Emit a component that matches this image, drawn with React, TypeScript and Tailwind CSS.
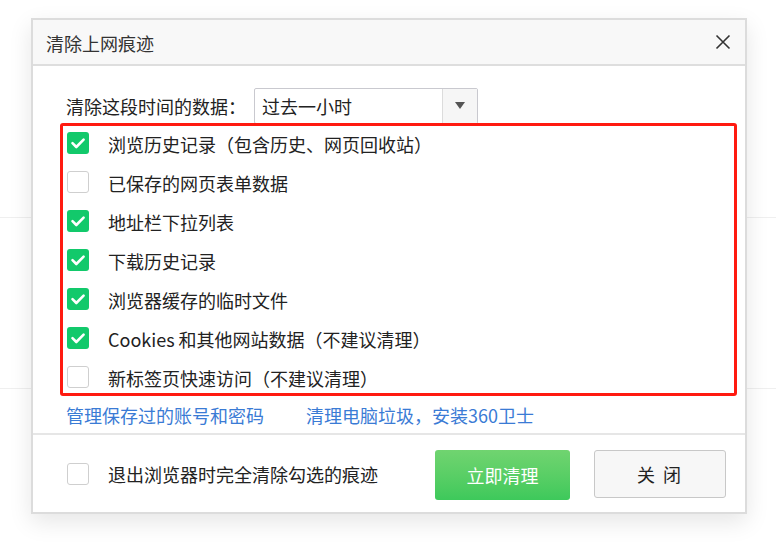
import React, { useState } from 'react';

type Item = { label: string; checked: boolean };

const initialItems: Item[] = [
  { label: '浏览历史记录（包含历史、网页回收站）', checked: true },
  { label: '已保存的网页表单数据', checked: false },
  { label: '地址栏下拉列表', checked: true },
  { label: '下载历史记录', checked: true },
  { label: '浏览器缓存的临时文件', checked: true },
  { label: 'Cookies 和其他网站数据（不建议清理）', checked: true },
  { label: '新标签页快速访问（不建议清理）', checked: false },
];

function Checkbox({ checked, onChange }: { checked: boolean; onChange: () => void }) {
  return (
    <button
      type="button"
      onClick={onChange}
      className={[
        'w-[22px] h-[22px] rounded-[3px] flex items-center justify-center shrink-0',
        checked ? 'bg-[#12c96b]' : 'bg-white border-[1.5px] border-[#cfcfcf]',
      ].join(' ')}
    >
      {checked && (
        <svg width="22" height="22" viewBox="0 0 22 22" fill="none">
          <path d="M5.5 11.2 L9.3 15 L16.6 7.6" stroke="#fff" strokeWidth="2.6" strokeLinecap="round" strokeLinejoin="round" />
        </svg>
      )}
    </button>
  );
}

export default function App() {
  const [items, setItems] = useState(initialItems);
  const [clearOnExit, setClearOnExit] = useState(false);

  const toggle = (index: number) => {
    setItems((prev) => prev.map((item, i) => (i === index ? { ...item, checked: !item.checked } : item)));
  };

  return (
    <div
      className="relative w-[776px] h-[555px] bg-white overflow-hidden text-[#222]"
      style={{ fontFamily: '"Noto Sans CJK SC", "Noto Sans", sans-serif' }}
    >
      {/* page behind the dialog */}
      <div className="pt-[217px]">
        <div className="border-t border-[#efefef] h-[171px]" />
        <div className="border-t border-[#efefef]" />
      </div>

      <div className="absolute left-[31px] top-[18px] w-[716px] h-[496px] bg-white border-2 border-[#dcdcdc] shadow-[0_8px_22px_rgba(0,0,0,0.10)] flex flex-col">
        <div className="h-[46px] bg-[#f8f8f8] border-b-2 border-[#dedede] flex items-center justify-between pl-[13px] pr-[14px] shrink-0">
          <span className="text-[18px] leading-none text-[#333] mt-[1px]">清除上网痕迹</span>
          <svg width="16" height="16" viewBox="0 0 16 16" fill="none">
            <path d="M1.5 1.5 L14.5 14.5 M14.5 1.5 L1.5 14.5" stroke="#333" strokeWidth="1.6" />
          </svg>
        </div>

        <div className="flex items-center pl-[33px] pt-[22px] h-[58px] shrink-0">
          <span className="text-[18px] leading-none w-[188px]">清除这段时间的数据：</span>
          <div className="flex h-[36px] w-[224px] border border-[#c9c9cf] rounded-[2px] bg-white">
            <div className="flex-1 flex items-center pl-[7px] text-[18px] leading-none">过去一小时</div>
            <div className="w-[35px] border-l border-[#dcdcdc] bg-[#f6f6f6] flex items-center justify-center">
              <svg width="10" height="8" viewBox="0 0 10 8">
                <path d="M0 0 H10 L5 7 Z" fill="#555" />
              </svg>
            </div>
          </div>
        </div>

        <div className="relative ml-[27px] w-[677px] -mt-[1px]">
          {items.map((item, index) => (
            <div key={index} className="h-[39px] flex items-center pl-[7px]">
              <Checkbox checked={item.checked} onChange={() => toggle(index)} />
              <span className="ml-[19px] mt-[3px] text-[18px] leading-none text-[#222]">{item.label}</span>
            </div>
          ))}
          <div className="absolute inset-0 border-[3px] border-[#ff1a10] rounded-[3px] pointer-events-none" />
        </div>

        <div className="flex items-center h-[37px] pl-[33px] text-[18px] leading-none text-[#3a7bd5] shrink-0">
          <a className="w-[240px]">管理保存过的账号和密码</a>
          <a>清理电脑垃圾，安装360卫士</a>
        </div>

        <div className="flex-1 border-t-2 border-[#e6e6e6] flex items-center pl-[34px] pr-[19px]">
          <Checkbox checked={clearOnExit} onChange={() => setClearOnExit((v) => !v)} />
          <span className="ml-[19px] mt-[1px] text-[18px] leading-none">退出浏览器时完全清除勾选的痕迹</span>
          <button
            type="button"
            className="ml-auto w-[135px] h-[50px] rounded-[3px] bg-gradient-to-b from-[#70d470] to-[#3dc95b] text-white text-[18px] leading-none mt-[3px]"
          >
            立即清理
          </button>
          <button
            type="button"
            className="ml-[24px] w-[132px] h-[48px] rounded-[3px] bg-[#f7f7f7] border-[1.5px] border-[#c8c8c8] text-[18px] leading-none text-[#222] tracking-[2px]"
          >
            关 闭
          </button>
        </div>
      </div>
    </div>
  );
}
